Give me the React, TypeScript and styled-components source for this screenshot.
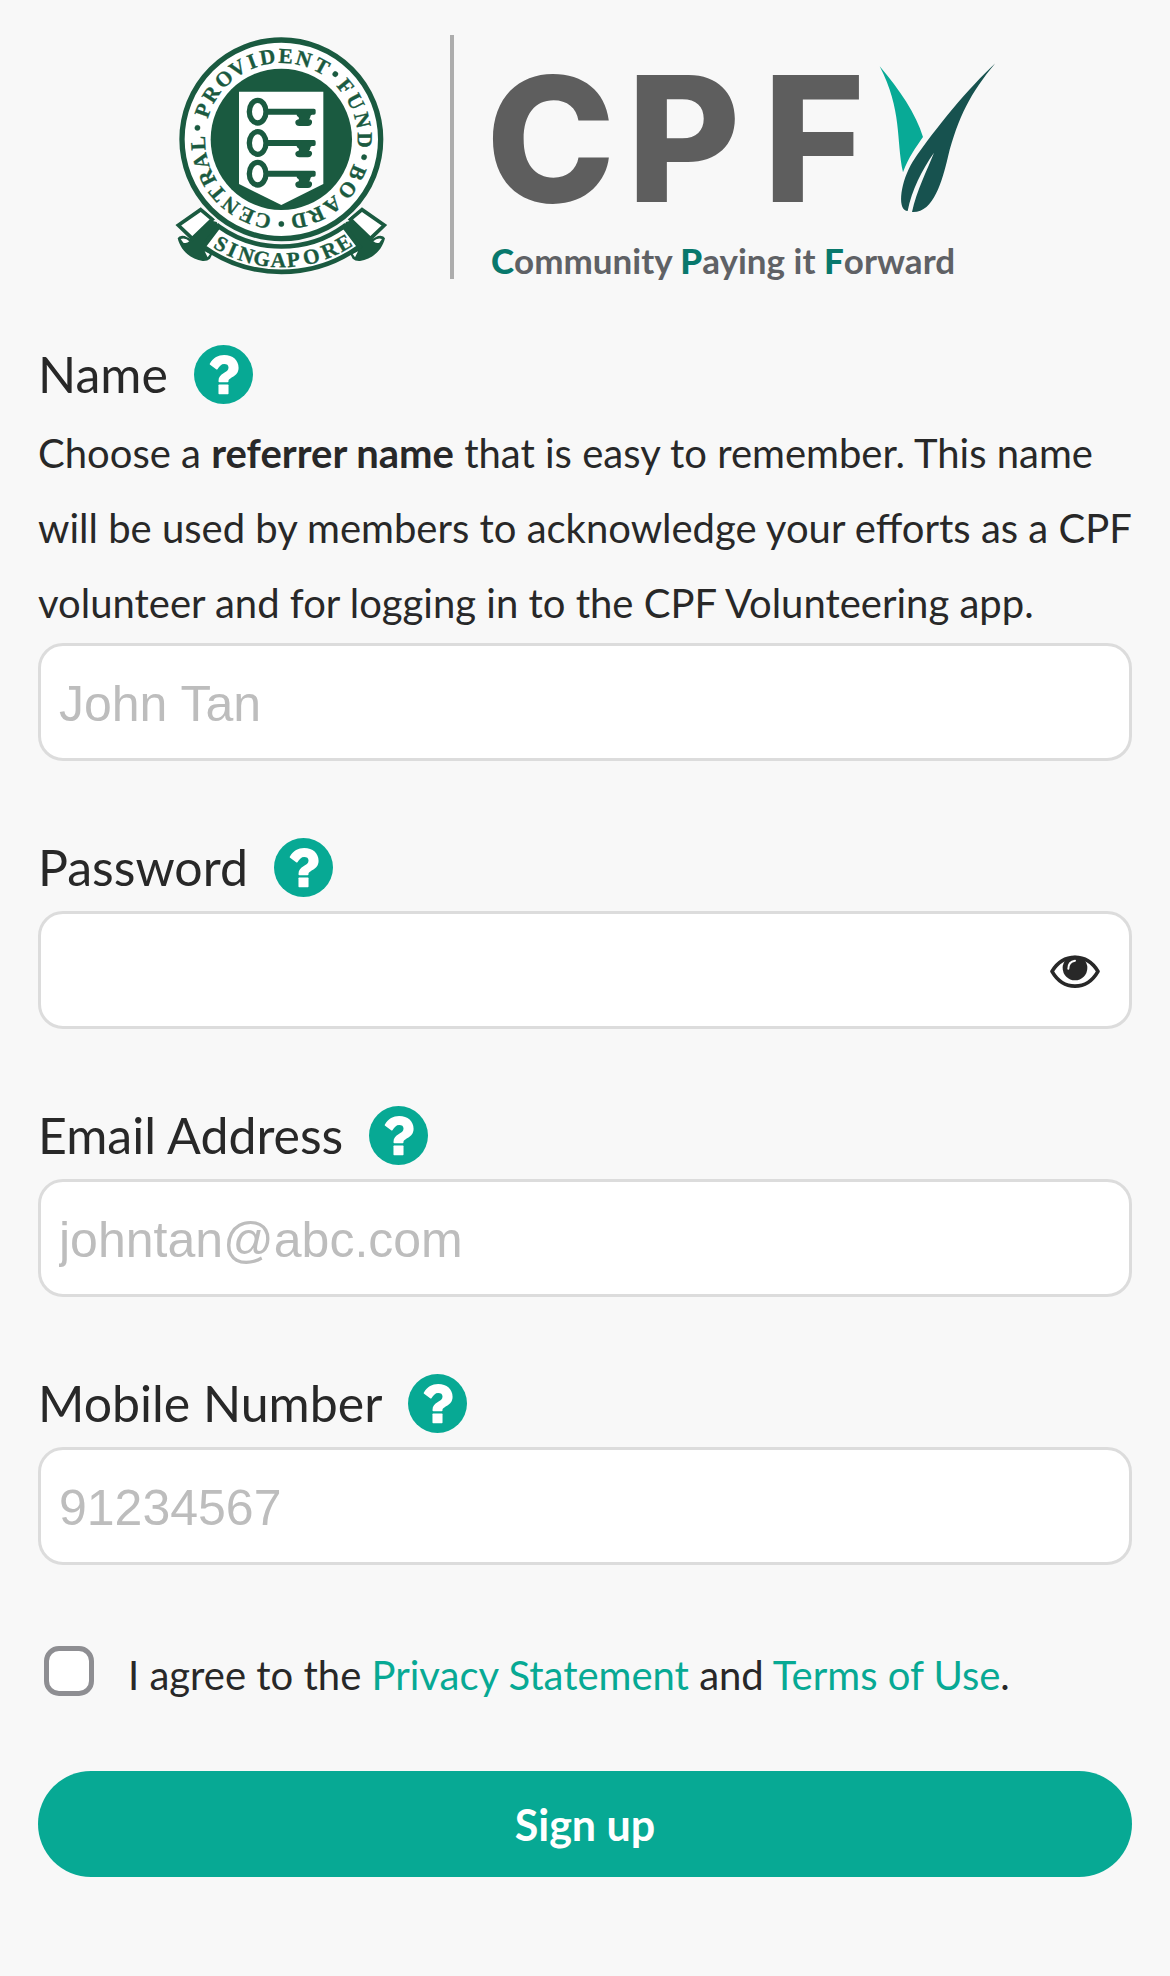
import React, { useState } from "react";
import styled, { createGlobalStyle } from "styled-components";

const teal = "#07a994";
const ink = "#282828";
const seal = "#1a5a40";

const GlobalStyle = createGlobalStyle`
  *, *::before, *::after { box-sizing: border-box; }
  body {
    margin: 0;
    background: #f8f8f8;
    color: ${ink};
    font-family: Lato, "Open Sans", sans-serif;
  }
`;

const Page = styled.main`
  display: flex;
  flex-direction: column;
  padding: 30px 38px 98px;
`;

const LogoArt = styled.svg`
  display: block;
  align-self: center;
  width: 830px;
  max-width: 100%;
  height: auto;
  margin-bottom: 58px;
`;

const Form = styled.form`
  display: flex;
  flex-direction: column;
`;

const Fields = styled.div`
  display: flex;
  flex-direction: column;
  gap: 76px;
`;

const Field = styled.div`
  display: flex;
  flex-direction: column;
`;

const LabelRow = styled.div`
  display: flex;
  align-items: center;
  gap: 26px;
  min-height: 60px;
  margin-bottom: 12px;
`;

const Label = styled.label`
  font-size: 50px;
  line-height: 60px;
`;

const IconButton = styled.button`
  display: flex;
  flex: none;
  padding: 0;
  border: 0;
  background: none;
  color: inherit;
  cursor: pointer;
`;

const Hint = styled.p`
  margin: 0;
  font-size: 40px;
  line-height: 75px;
`;

const InputBox = styled.div`
  display: flex;
  align-items: center;
  height: 118px;
  margin-top: 2px;
  padding: 3px 29px 0 18px;
  border: 3px solid #dcdcdc;
  border-radius: 25px;
  background: #fff;
`;

const Input = styled.input`
  flex: 1;
  min-width: 0;
  height: 100%;
  padding: 0;
  border: 0;
  outline: 0;
  background: transparent;
  color: ${ink};
  font-family: "Liberation Sans", Arial, sans-serif;
  font-size: 50px;
  &::placeholder { color: #bdbdbd; opacity: 1; }
`;

const AgreeRow = styled.div`
  display: flex;
  align-items: flex-start;
  gap: 34px;
  margin: 81px 0 67px;
  padding-left: 6px;
`;

const Checkbox = styled.input`
  appearance: none;
  flex: none;
  width: 50px;
  height: 50px;
  margin: 0;
  border: 5px solid #8e8e92;
  border-radius: 15px;
  background: #fff;
  &:checked { background: ${teal}; }
`;

const AgreeLabel = styled.label`
  font-size: 40px;
  line-height: 58px;
`;

const Link = styled.a`
  color: ${teal};
  text-decoration: none;
`;

const SubmitButton = styled.button`
  height: 106px;
  border: 0;
  border-radius: 53px;
  background: ${teal};
  color: #fff;
  font-family: inherit;
  font-size: 43px;
  font-weight: 700;
  cursor: pointer;
`;

const sealLetters: [string, number][] = [
  ["P", -69.8], ["R", -57.3], ["O", -43.6], ["V", -31.6], ["I", -20.7], ["D", -9.6],
  ["E", 3], ["N", 15.7], ["T", 29], ["•", 39.6],
  ["F", 50.5], ["U", 63], ["N", 76.7], ["D", 90.5], ["•", 102.2],
  ["B", 113.8], ["O", 127.4], ["A", 142], ["R", 155.2], ["D", 167.8], ["•", 180],
  ["C", 192.8], ["E", 204.7], ["N", 217.5], ["T", 229.8], ["R", 242.6], ["A", 254.8],
  ["L", 267.3], ["•", 277.8],
];

const ribbonLetters: [string, number][] = [
  ["S", 29.9], ["I", 23.9], ["N", 16.9], ["G", 9.3], ["A", 1.4],
  ["P", -5.7], ["O", -14.3], ["R", -23.4], ["E", -31],
];

function Key({ y }: { y: number }) {
  return (
    <g transform={`translate(0 ${y})`}>
      <ellipse cx="293" cy="0" rx="25" ry="34" fill="none" stroke={seal} strokeWidth="16" />
      <path
        fill={seal}
        d="M320 -9 H462 Q467 -9 467 -4 V4 Q467 9 462 9 H456 Q451 10 451 15 Q451 20 447 23 Q458 24 456 34 Q453 44 442 43 H420 Q408 44 406 34 Q405 25 416 23 Q419 17 411 13 L410 9 H320 Z"
      />
    </g>
  );
}

function RibbonTail() {
  return (
    <g>
      <path
        fill={seal}
        d="M148 600 L170 606 L178 622 L130 680 L158 700 L150 716 Q142 724 128 723 C92 718 62 692 53 655 Q58 644 74 648 L98 660 Z"
      />
      <path fill="#fff" d="M62 657 Q76 652 88 664 Q80 672 70 668 Z" />
      <path fill="#fff" d="M134 694 L150 702 L143 712 Z" />
      <path fill="#fff" stroke={seal} strokeWidth="11" d="M122 569 L157 598 L97 656 L55 616 Z" />
    </g>
  );
}

function Logo() {
  return (
    <LogoArt viewBox="170 30 830 256" role="img" aria-label="Central Provident Fund Board, CPFV">
      <g transform="translate(160 20) scale(0.33333)">
        <RibbonTail />
        <g transform="translate(728 0) scale(-1 1)">
          <RibbonTail />
        </g>
        <path
          fill="#fff"
          stroke={seal}
          strokeWidth="14"
          d="M176 619 A322 322 0 0 0 552 619 L598 680 A400 400 0 0 1 130 680 Z"
        />
        <circle cx="364" cy="358" r="312" fill="#f8f8f8" />
        <circle cx="364" cy="358" r="298" fill="#fff" stroke={seal} strokeWidth="16" />
        <circle cx="364" cy="358" r="212" fill={seal} />
        <path fill="#fff" d="M237 215 H490 V492 L364 555 L237 492 Z" />
        <Key y={275} />
        <Key y={369} />
        <Key y={461} />
        <g
          fill={seal}
          stroke={seal}
          strokeWidth="1"
          fontFamily='"Liberation Serif", serif'
          fontSize="64"
          fontWeight="700"
          textAnchor="middle"
        >
          {sealLetters.map(([ch, a], i) =>
            ch === "•" ? (
              <circle key={i} cx="364" cy="104" r="8" transform={`rotate(${a} 364 358)`} />
            ) : (
              <text key={i} x="364" y="129" transform={`rotate(${a} 364 358)`}>
                {ch}
              </text>
            )
          )}
          {ribbonLetters.map(([ch, a], i) => (
            <text key={i} x="364" y="742" transform={`rotate(${a} 364 358)`}>
              {ch}
            </text>
          ))}
        </g>
      </g>
      <rect x="450" y="35" width="4" height="244" fill="#adadad" />
      <g fill="#5e5e5e" fontFamily="Inter, sans-serif" fontSize="174" fontWeight="800">
        <text x="486" y="202">C</text>
        <text x="627" y="202">P</text>
        <text x="763" y="202">F</text>
      </g>
      <g transform="translate(730 40) scale(0.33333)">
        <path fill="#08aa96" d="M449 79 C508 148 558 222 579 291 C558 322 536 350 519 397 C498 300 517 210 449 79 Z" />
        <path
          fill="#17524f"
          d="M796 70 C718 142 618 262 548 365 C512 425 502 502 528 512 L533 513 C545 450 576 390 612 338 C592 390 560 450 546 516 C610 520 636 425 654 350 C684 232 722 158 796 70 Z"
        />
      </g>
      <text x="491" y="274" fill="#5f6165" fontFamily="Lato, sans-serif" fontSize="35" fontWeight="700">
        <tspan fill="#08786c" fontWeight="900">C</tspan>ommunity{" "}
        <tspan fill="#08786c" fontWeight="900">P</tspan>aying it{" "}
        <tspan fill="#08786c" fontWeight="900">F</tspan>orward
      </text>
    </LogoArt>
  );
}

function Help({ topic }: { topic: string }) {
  return (
    <IconButton type="button" aria-label={`Help: ${topic}`}>
      <svg width="59" height="59" viewBox="0 0 176 176" aria-hidden="true">
        <circle cx="88" cy="88" r="88" fill={teal} />
        <path
          fill="#fff"
          d="M47 56 C58 38 72 30 90 30 C116 30 133 46 133 68 C133 96 103 96 103 108 Q103 111 100 111 H76 Q73 111 73 108 C73 82 103 84 103 68 C103 60 98 57 90 57 C81 57 77 63 70 72 Q68 74 66 72 L48 59 Q46 58 47 56 Z"
        />
        <rect x="73" y="118" width="30" height="29" rx="2" fill="#fff" />
      </svg>
    </IconButton>
  );
}

function EyeIcon() {
  return (
    <svg width="50" height="35" viewBox="150 164 150 105" aria-hidden="true">
      <path
        fill="#fff"
        stroke={ink}
        strokeWidth="11"
        strokeLinejoin="round"
        d="M156 216 C190 160 260 160 294 216 C260 275 190 275 156 216 Z"
      />
      <circle cx="225" cy="206" r="37" fill={ink} />
      <path fill="none" stroke="#fff" strokeWidth="6" strokeLinecap="round" d="M205 208 Q205 187 225 184" />
    </svg>
  );
}

export default function App() {
  const [shown, setShown] = useState(false);
  return (
    <>
      <GlobalStyle />
      <Page>
        <Logo />
        <Form onSubmit={(e) => e.preventDefault()}>
          <Fields>
            <Field>
              <LabelRow>
                <Label htmlFor="name">Name</Label>
                <Help topic="Name" />
              </LabelRow>
              <Hint>
                Choose a <strong>referrer name</strong> that is easy to remember. This name will be used by
                members to acknowledge your efforts as a CPF volunteer and for logging in to the CPF
                Volunteering app.
              </Hint>
              <InputBox>
                <Input id="name" type="text" placeholder="John Tan" />
              </InputBox>
            </Field>
            <Field>
              <LabelRow>
                <Label htmlFor="password">Password</Label>
                <Help topic="Password" />
              </LabelRow>
              <InputBox>
                <Input id="password" type={shown ? "text" : "password"} />
                <IconButton type="button" aria-label="Show password" onClick={() => setShown(!shown)}>
                  <EyeIcon />
                </IconButton>
              </InputBox>
            </Field>
            <Field>
              <LabelRow>
                <Label htmlFor="email">Email Address</Label>
                <Help topic="Email Address" />
              </LabelRow>
              <InputBox>
                <Input id="email" type="email" placeholder="johntan@abc.com" />
              </InputBox>
            </Field>
            <Field>
              <LabelRow>
                <Label htmlFor="mobile">Mobile Number</Label>
                <Help topic="Mobile Number" />
              </LabelRow>
              <InputBox>
                <Input id="mobile" type="tel" placeholder="91234567" />
              </InputBox>
            </Field>
          </Fields>
          <AgreeRow>
            <Checkbox id="agree" type="checkbox" />
            <AgreeLabel htmlFor="agree">
              I agree to the <Link href="#privacy">Privacy Statement</Link> and{" "}
              <Link href="#terms">Terms of Use</Link>.
            </AgreeLabel>
          </AgreeRow>
          <SubmitButton type="submit">Sign up</SubmitButton>
        </Form>
      </Page>
    </>
  );
}
